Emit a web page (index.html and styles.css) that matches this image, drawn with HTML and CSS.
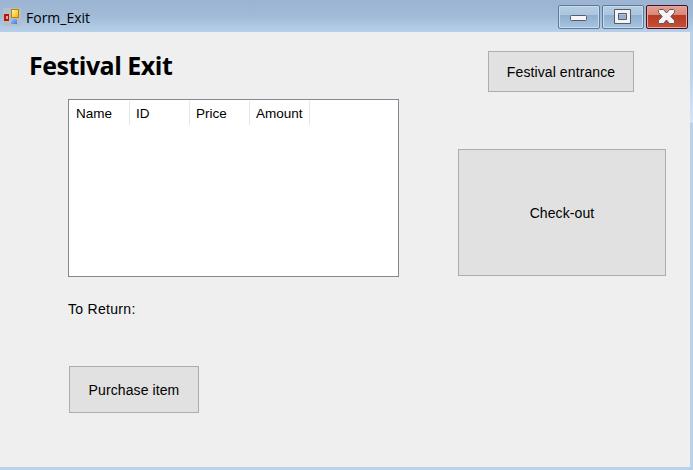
FILE: index.html
```
<!DOCTYPE html>
<html lang="en">
<head>
<meta charset="utf-8">
<title>Form_Exit</title>
<link rel="stylesheet" href="styles.css">
</head>
<body>
<div class="window">
  <header class="titlebar">
    <svg class="app-icon" width="18" height="18" viewBox="0 0 18 18">
      <defs>
        <linearGradient id="gold" x2="1" y2="1"><stop stop-color="#fff3a5"/><stop offset="1" stop-color="#f5b800"/></linearGradient>
        <linearGradient id="blue" x2="1" y2="1"><stop stop-color="#9cc4fa"/><stop offset="1" stop-color="#3d7be0"/></linearGradient>
      </defs>
      <path d="M0 0h18v18H0z" fill="#b9bec4"/>
      <path d="M1 1h6v4H1zM1 14h6v3H1z" fill="#b0bfd0"/>
      <path d="M1 6h5v7H1z" fill="#b51808"/>
      <path d="M3 8h2v3H3z" fill="#f0a090"/>
      <path d="M8 1h8v9H8z" fill="#b98200"/>
      <path d="M9 2h6v7H9z" fill="url(#gold)"/>
      <path d="M8 11h6v5H8z" fill="url(#blue)"/>
    </svg>
    <span class="caption">Form_Exit</span>
    <div class="controls">
      <button class="control" aria-label="Minimize">
        <svg width="40" height="22" viewBox="0 0 40 22"><rect x="11.5" y="9.5" width="16" height="5" rx="1" fill="#f5f5f5" stroke="#555c69"/></svg>
      </button>
      <button class="control" aria-label="Maximize">
        <svg width="40" height="22" viewBox="0 0 40 22"><path d="M11.5 3.5h16v14h-16zM15.500 7.500v6h8v-6z" fill="#f3f3f3" fill-rule="evenodd" stroke="#555c69"/></svg>
      </button>
      <button class="control close" aria-label="Close">
        <svg width="40" height="22" viewBox="0 0 40 22"><path d="M12.500 3.500h4l3 3.500 3-3.500h4l1 1v2L23.800 10.500l3.700 4v2l-1 1h-4l-3-3.500-3 3.500h-4l-1-1v-2l3.700-4-3.700-4v-2z" fill="#f5f5f5" stroke="#5f5560" stroke-linejoin="round"/></svg>
      </button>
    </div>
  </header>
  <main class="client">
    <section class="left">
      <h1>Festival Exit</h1>
      <div class="list">
        <div class="columns"><span>Name</span><span>ID</span><span>Price</span><span>Amount</span></div>
      </div>
      <div class="label">To Return:</div>
      <button class="btn purchase">Purchase item</button>
    </section>
    <section class="right">
      <button class="btn entrance">Festival entrance</button>
      <button class="btn checkout">Check-out</button>
    </section>
  </main>
</div>
</body>
</html>
```

FILE: styles.css
```
* { box-sizing: border-box; }
body { margin: 0; font: 14px/18px "Liberation Sans", sans-serif; color: #000; }
button { font: inherit; color: inherit; padding: 0; }
.window {
  width: 693px; height: 470px; overflow: hidden;
  display: flex; flex-direction: column;
  background: linear-gradient(#b9d1ea 0 70px, #d3e5f8 122px, #b9d1ea 123px);
}
.titlebar {
  height: 32px; flex: none; display: flex;
  padding-left: 3px;
  background: linear-gradient(#9ab4d2, #a0bad7 50%, #b8d0ea);
}
.app-icon { flex: none; margin-top: 8px; }
.caption {
  margin: 8px 0 0 5px;
  font: 14px/20px "Open Sans", sans-serif;
}
.controls { display: flex; gap: 2px; margin: 5px 5px 0 auto; }
.control {
  width: 42px; height: 24px;
  border: 1px solid #5f7894; border-radius: 2px;
  box-shadow: inset 0 0 0 1px #c9dcef;
  background: linear-gradient(#b7cce3, #abc5e0 42%, #91aecf 43%, #a6c3e2);
}
.control svg { display: block; }
.close {
  border-color: #48101f;
  box-shadow: inset 0 0 0 1px #e5a79e;
  background: linear-gradient(#e3a096, #d98679 42%, #b83a22 43%, #c4503a);
}
.client { width: 690px; height: 435px; display: flex; background: #efefef; }
.left { width: 458px; padding-top: 15px; }
h1 {
  margin: 0 0 16px 29px; height: 36px;
  font: bold 25px/36px "Open Sans", sans-serif;
  letter-spacing: -0.5px; white-space: nowrap;
}
.list {
  width: 331px; height: 178px; margin-left: 68px;
  border: 1px solid #828790; background: #fff;
}
.columns { display: flex; padding-top: 1px; font-size: 13.5px; }
.columns span {
  width: 60px; height: 24px; padding-left: 6px; line-height: 25px;
  border-right: 1px solid #e5e5e5;
}
.columns span:first-child { width: 61px; padding-left: 7px; }
.label { margin: 23px 0 0 68px; height: 18px; letter-spacing: 0.3px; }
.btn {
  display: flex; align-items: center; justify-content: center;
  border: 1px solid #adadad; background: #e1e1e1;
  letter-spacing: 0.1px;
}
.purchase { width: 130px; height: 47px; margin: 48px 0 0 69px; }
.right { padding-top: 19px; }
.entrance { width: 146px; height: 41px; margin-left: 30px; }
.checkout { width: 208px; height: 127px; margin-top: 57px; }
```
